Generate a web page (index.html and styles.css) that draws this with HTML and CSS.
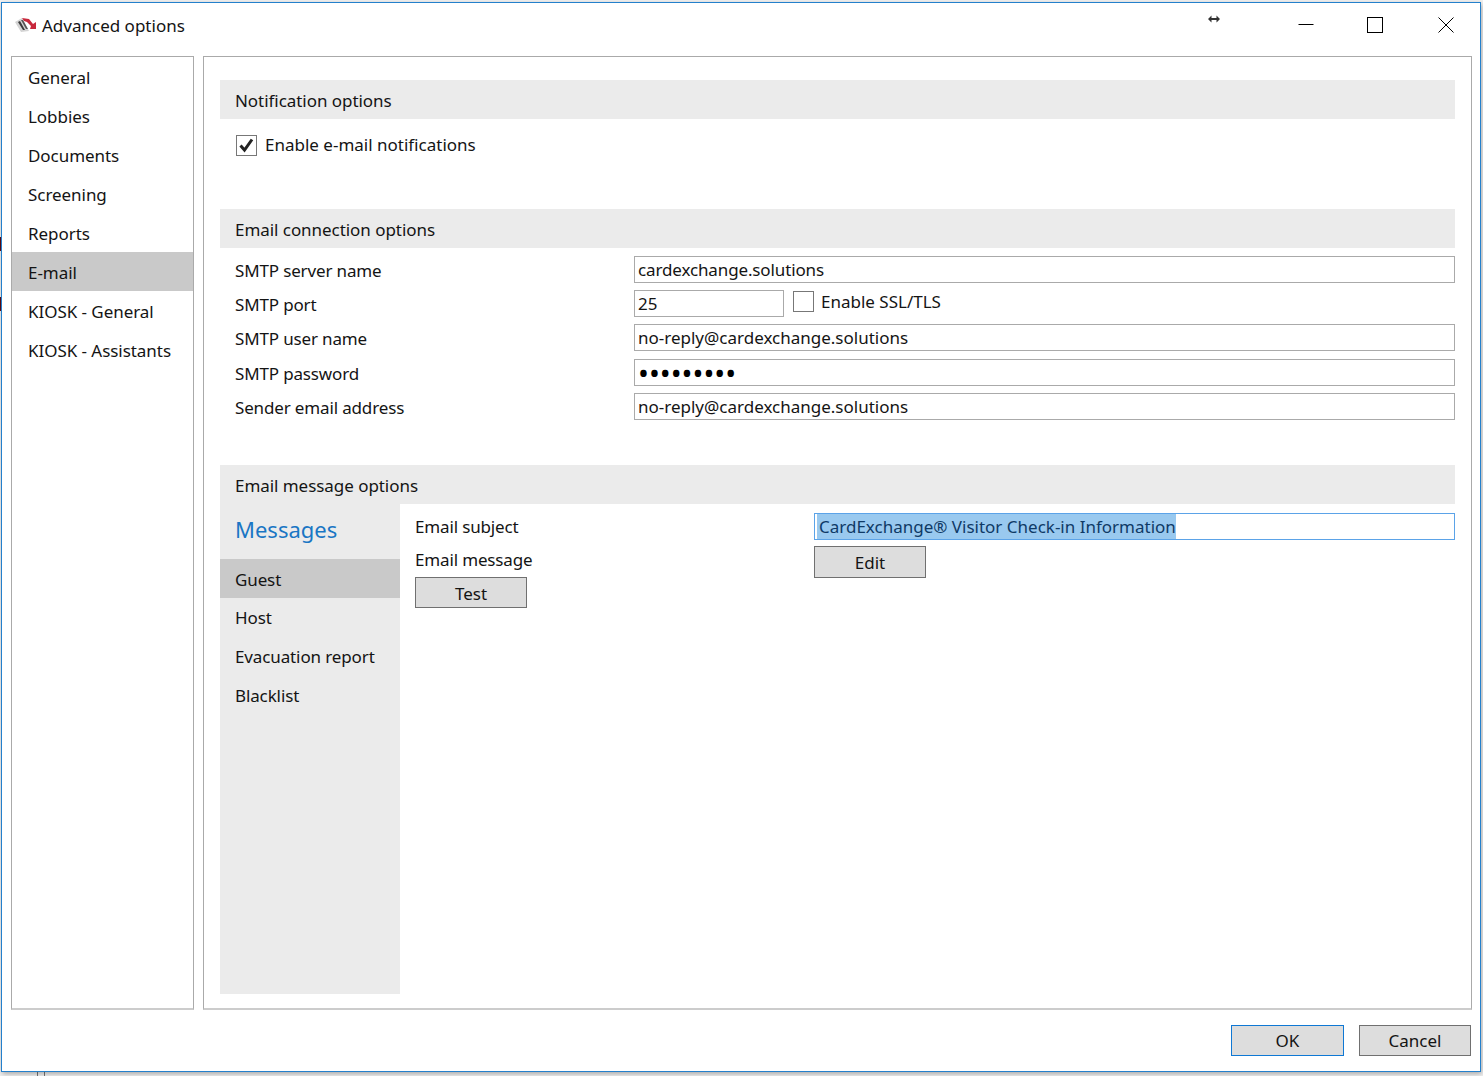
FILE: index.html
```html
<!DOCTYPE html>
<html lang="en">
<head>
    <meta charset="UTF-8">
    <title>Advanced options</title>
    <link rel="stylesheet" href="styles.css">
</head>
<body>
    <div class="window">
        <div class="titlebar">
            <svg class="logo" width="22" height="16" viewBox="0 0 22 16">
                <path d="M0 5 L7 1 L14 14 L6 15 Z" fill="#d4d4d4"/>
                <path d="M3 5 L5 4 L10 13 L8 13 Z" fill="#3a3a3a"/>
                <path d="M6 3 L8 3 L13 12 L11 12 Z" fill="#555"/>
                <path d="M7 1 L14 2 L18 7 L21 5 L21 12 L15 12 L16 9 L12 5 L9 4 Z" fill="#c8283c"/>
            </svg>
            <span class="title">Advanced options</span>
            <svg class="resize-icon" width="12" height="8" viewBox="0 0 12 8">
                <path d="M0 4 L3.5 0.5 V3 H8.5 V0.5 L12 4 L8.5 7.5 V5 H3.5 V7.5 Z" fill="#333"/>
            </svg>
            <svg class="win-btn min" width="16" height="16" viewBox="0 0 16 16"><path d="M0.5 7.5 H15.5" stroke="#000" fill="none"/></svg>
            <svg class="win-btn max" width="16" height="16" viewBox="0 0 16 16"><rect x="0.5" y="0.5" width="15" height="15" stroke="#000" fill="none"/></svg>
            <svg class="win-btn close" width="16" height="16" viewBox="0 0 16 16"><path d="M0.5 0.5 L15.5 15.5 M15.5 0.5 L0.5 15.5" stroke="#000" fill="none"/></svg>
        </div>

        <div class="panels">
            <div class="nav">
                <div class="item">General</div>
                <div class="item">Lobbies</div>
                <div class="item">Documents</div>
                <div class="item">Screening</div>
                <div class="item">Reports</div>
                <div class="item selected">E-mail</div>
                <div class="item">KIOSK - General</div>
                <div class="item">KIOSK - Assistants</div>
            </div>

            <div class="main">
                <div class="section-head">Notification options</div>
                <div class="notify">
                    <label class="check-row">
                        <span class="checkbox">
                            <svg width="19" height="19" viewBox="0 0 19 19"><path d="M3.5 9.5 L7.5 14 L15 3.5" stroke="#222" stroke-width="3" fill="none"/></svg>
                        </span>
                        Enable e-mail notifications
                    </label>
                </div>

                <div class="section-head">Email connection options</div>
                <div class="conn-grid">
                    <div class="label">SMTP server name</div>
                    <input class="field tight" value="cardexchange.solutions">
                    <div class="label">SMTP port</div>
                    <div class="port-row">
                        <input class="field port" value="25">
                        <label class="check-row ssl"><span class="checkbox"></span>Enable SSL/TLS</label>
                    </div>
                    <div class="label">SMTP user name</div>
                    <input class="field" value="no-reply@cardexchange.solutions">
                    <div class="label">SMTP password</div>
                    <input class="field password" type="password" value="secret123">
                    <div class="label">Sender email address</div>
                    <input class="field" value="no-reply@cardexchange.solutions">
                </div>

                <div class="section-head">Email message options</div>
                <div class="messages">
                    <div class="msg-side">
                        <div class="msg-title">Messages</div>
                        <div class="item selected">Guest</div>
                        <div class="item">Host</div>
                        <div class="item">Evacuation report</div>
                        <div class="item">Blacklist</div>
                    </div>
                    <div class="msg-form">
                        <div class="label">Email subject</div>
                        <div class="field subject"><span class="sel">CardExchange® Visitor Check-in Information</span></div>
                        <div class="msg-left">
                            <div class="label">Email message</div>
                            <button class="btn test">Test</button>
                        </div>
                        <div><button class="btn edit">Edit</button></div>
                    </div>
                </div>
            </div>
        </div>

        <div class="footer">
            <button class="btn default">OK</button>
            <button class="btn">Cancel</button>
        </div>
    </div>
</body>
</html>
```

FILE: styles.css
```css
html, body {
    padding: 0;
    margin: 0;
}
body {
    /* bits of the desktop showing round the window */
    background:
        linear-gradient(#5e0a14, #5e0a14) 0 237px / 1px 14px no-repeat,
        linear-gradient(#5e0a14, #5e0a14) 0 297px / 1px 14px no-repeat,
        linear-gradient(#777, #777) 37px 1072px / 1px 4px no-repeat,
        linear-gradient(#777, #777) 44px 1072px / 1px 4px no-repeat,
        #f1f1f1;
    height: 1076px;
    overflow: hidden;
    font-family: "Noto Sans", "Open Sans", sans-serif;
    font-size: 17px;
    color: #141414;
}
.window {
    box-sizing: border-box;
    width: 1480px;
    height: 1070px;
    margin: 2px 0 0 1px;
    background: #fff;
    border: 1px solid #2480cc;
    box-shadow: 1px 2px 5px rgba(0, 0, 0, 0.3);
    display: flex;
    flex-direction: column;
}

.titlebar {
    height: 53px;
    display: flex;
    align-items: flex-start;
    padding-top: 14px;
    box-sizing: border-box;
}
.logo {
    margin: 0 0 0 13px;
}
.title {
    margin-left: 5px;
    margin-top: -1px;
    line-height: 20px;
}
.resize-icon {
    margin: -2px 0 0 auto;
}
.win-btn.min {
    margin-left: 78px;
}
.win-btn.max {
    margin-left: 53px;
}
.win-btn.close {
    margin-left: 55px;
    margin-right: 26px;
}

.panels {
    display: flex;
    gap: 9px;
    height: 954px;
    padding: 0 8px 0 9px;
}
.nav, .main {
    box-sizing: border-box;
    border: 1px solid #aaa;
    border-bottom: 2px solid #ccc;
    background: #fff;
}
.nav {
    width: 183px;
    flex: none;
}
.main {
    flex: 1;
    padding: 23px 16px 14px 16px;
    display: flex;
    flex-direction: column;
}

.item {
    height: 39px;
    line-height: 41px;
    padding-left: 15px;
    letter-spacing: -0.12px;
}
.nav .item {
    padding-left: 16px;
    letter-spacing: -0.05px;
}
.msg-side .item {
    line-height: 39px;
}
.msg-side .selected {
    line-height: 41px;
}
.selected {
    background: #c9c9c9;
}

.section-head {
    height: 39px;
    line-height: 41px;
    padding-left: 15px;
    background: #ebebeb;
    letter-spacing: -0.05px;
}
.notify {
    height: 90px;
    padding: 16px 0 0 16px;
    box-sizing: border-box;
}
.check-row {
    display: flex;
    align-items: flex-start;
    gap: 8px;
    line-height: 20px;
}
.checkbox {
    box-sizing: border-box;
    width: 21px;
    height: 21px;
    border: 1px solid #777;
    background: #fff;
    display: block;
    flex: none;
}
.checkbox svg {
    display: block;
}

.conn-grid {
    display: grid;
    grid-template-columns: 399px 1fr;
    grid-auto-rows: 27px;
    row-gap: 7.2px;
    padding: 8px 0 0 15px;
    height: 217px;
    box-sizing: border-box;
}
.label {
    line-height: 27px;
    letter-spacing: -0.15px;
}
.conn-grid .label {
    line-height: 29px;
}
.field {
    box-sizing: border-box;
    width: 100%;
    height: 27px;
    border: 1px solid #aaa;
    padding: 0 3px;
    margin: 0;
    font: inherit;
    color: #141414;
    background: #fff;
    line-height: 25px;
    outline: none;
}
.tight {
    letter-spacing: -0.13px;
}
.password {
    font-size: 29px;
    color: #000;
}
.port-row {
    display: flex;
    gap: 9px;
}
.field.port {
    width: 150px;
}
.ssl {
    margin-top: 1px;
    gap: 7px;
    line-height: 21px;
}

.messages {
    display: flex;
    flex: 1;
}
.msg-side {
    width: 180px;
    flex: none;
    background: #ebebeb;
}
.msg-title {
    height: 55px;
    line-height: 50px;
    padding-left: 15px;
    font-size: 22px;
    color: #1a76c4;
}
.msg-form {
    flex: 1;
    display: grid;
    grid-template-columns: 399px 1fr;
    grid-template-rows: 27px auto;
    row-gap: 6px;
    padding: 9px 0 0 15px;
    align-content: start;
}
.subject {
    border-color: #5ba3e8;
    padding: 0 3px 0 2px;
    white-space: nowrap;
}
.sel {
    display: inline-block;
    height: 25px;
    line-height: 25px;
    padding-left: 2px;
    background: #99c9ef;
    color: #0f3a66;
}

.btn {
    box-sizing: border-box;
    width: 112px;
    height: 31px;
    padding: 0;
    border: 1px solid #707070;
    background: #dddddd;
    font: inherit;
    color: #141414;
}
.btn.edit {
    height: 32px;
}
.btn.test {
    display: block;
    height: 31px;
    margin-top: 4px;
    padding-top: 1px;
}
.btn.default {
    border-color: #0f78d4;
    width: 113px;
}

.footer {
    display: flex;
    justify-content: flex-end;
    gap: 15px;
    padding: 15px 9px 0 0;
}
```
